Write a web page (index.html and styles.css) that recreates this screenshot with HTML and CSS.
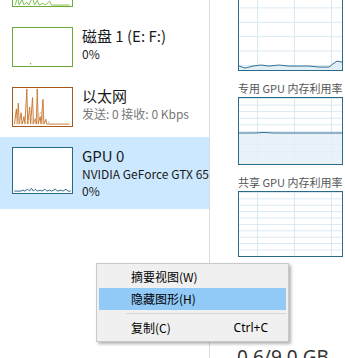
FILE: index.html
```html
<!DOCTYPE html>
<html>
<head>
	<title>任务管理器 - 性能</title>
<link rel="stylesheet" href="styles.css">
</head>
<body>
	<div class="window">
		<div class="sidebar">
			<div class="item item-first">
				<svg class="thumb thumb-disk" viewBox="0 0 61 40" width="61" height="40">
					<polyline points="2,39 4,30 6,39 9,33 11,39 14,36 16,39 20,31 22,39 25,34 27,39 31,37 33,39 38,35 40,39 59,39" fill="none" stroke="#7cc04a" stroke-width="1"/>
				</svg>
			</div>
			<div class="item">
				<svg class="thumb thumb-disk" viewBox="0 0 61 40" width="61" height="40">
					<circle cx="18" cy="37.5" r="0.8" fill="#7cc04a"/>
				</svg>
				<div class="info">
					<div class="title">磁盘 1 (E: F:)</div>
					<div class="sub">0%</div>
				</div>
			</div>
			<div class="item">
				<svg class="thumb thumb-net" viewBox="0 0 61 40" width="61" height="40">
					<polyline points="1,38 3,22 4,38 5,16 6,38 8,26 9,38 11,30 12,38 14,1 15,38 17,20 18,38 20,10 21,38 23,32 24,38 25,1 26,38 28,30 29,38 31,12 32,38 34,33 35,38 59,38" fill="none" stroke="#c8782f" stroke-width="1"/>
					<polyline points="4,38 5,28 6,38 10,34 12,38 19,30 20,38 30,24 31,38" fill="none" stroke="#e3b48a" stroke-width="1"/>
					<circle cx="37" cy="36" r="0.8" fill="#bbbbbb"/>
				</svg>
				<div class="info">
					<div class="title">以太网</div>
					<div class="sub sub-grey">发送: 0 接收: 0 Kbps</div>
				</div>
			</div>
			<div class="item item-selected">
				<svg class="thumb thumb-gpu" viewBox="0 0 61 47" width="61" height="47">
					<polyline points="1,45 8,45 10,44 12,45 15,43 17,45 19,42 21,45 23,43 25,45 28,44 30,45 33,43 35,45 38,44 40,45 44,43 46,45 50,44 52,45 55,43 57,45 60,45" fill="none" stroke="#27698c" stroke-width="1"/>
				</svg>
				<div class="info">
					<div class="title">GPU 0</div>
					<div class="sub">NVIDIA GeForce GTX 650</div>
					<div class="sub">0%</div>
				</div>
			</div>
		</div>

		<div class="detail">
			<div class="graph graph-main">
				<svg class="chart" viewBox="0 0 103 90" preserveAspectRatio="none">
					<polygon points="0,86 6,88 14,86 22,85 30,86 40,85 50,86 60,86 70,86 80,87 90,87 95,83 98,81 103,82 103,90 0,90" fill="#e3eff7"/>
					<polyline points="0,86 6,88 14,86 22,85 30,86 40,85 50,86 60,86 70,86 80,87 90,87 95,83 98,81 103,82" fill="none" stroke="#2f6f92" stroke-width="1"/>
				</svg>
			</div>
			<div class="label">专用 GPU 内存利用率</div>
			<div class="graph graph-fine">
				<svg class="chart" viewBox="0 0 103 66" preserveAspectRatio="none">
					<rect x="0" y="35" width="103" height="31" fill="#e3eff7" fill-opacity="0.8"/>
					<polyline points="0,35 15,35 25,34.5 35,35 103,35" fill="none" stroke="#2f6f92" stroke-width="1"/>
				</svg>
			</div>
			<div class="label">共享 GPU 内存利用率</div>
			<div class="graph graph-fine graph-last"></div>
			<div class="usage">0.6/9.0 GB</div>
		</div>

		<div class="menu">
			<div class="menu-item">摘要视图(W)</div>
			<div class="menu-item menu-active">隐藏图形(H)</div>
			<div class="menu-sep"></div>
			<div class="menu-item"><span>复制(C)</span><span class="shortcut">Ctrl+C</span></div>
		</div>
	</div>
</body>
</html>
```

FILE: styles.css
```css
body {
	margin: 0;
	background: #fff;
	font-family: "Noto Sans CJK SC", "Noto Sans", sans-serif;
	color: #1a1a1a;
}

.window {
	position: relative;
	display: flex;
	width: 345px;
	height: 358px;
	overflow: hidden;
}

/* left list of devices */
.sidebar {
	width: 209px;
	flex-shrink: 0;
	border-right: 1px solid #dcdcdc;
	margin-top: -43px;
	overflow: hidden;
}

.item {
	display: flex;
	align-items: flex-start;
	gap: 9px;
	padding: 10px 0 10px 12px;
	white-space: nowrap;
}

.item-selected {
	background: #cce8ff;
}

.thumb {
	display: block;
	flex-shrink: 0;
	box-sizing: border-box;
	background: #fff;
}

.thumb-disk { border: 1px solid #6aab38; }
.thumb-net { border: 1px solid #a8571a; }
.thumb-gpu { border: 1px solid #27698c; }

.title {
	font-size: 15px;
	line-height: 18px;
}

.sub {
	font-size: 12px;
	line-height: 17px;
}

.sub-grey {
	color: #777;
}

/* right side graphs */
.detail {
	flex: 1;
	padding-left: 28px;
	overflow: hidden;
}

.graph {
	position: relative;
	box-sizing: border-box;
	width: 105px;
	border: 1px solid #2b6a8d;
	background-color: #fff;
	background-image:
		linear-gradient(to right, #d8e8f2 1px, transparent 1px),
		linear-gradient(to bottom, #d8e8f2 1px, transparent 1px);
	background-repeat: repeat;
}

.graph-main {
	height: 91px;
	margin-top: -20px;
	background-size: 37px 100%, 100% 14.4px;
	background-position: 18px 0, 0 12px;
}

.graph-fine {
	height: 68px;
	background-size: 37px 100%, 100% 10%;
	background-position: 18px 0, 0 0;
}

.graph-last {
	height: 66px;
}

.chart {
	position: absolute;
	left: 0;
	top: 0;
	width: 100%;
	height: 100%;
}

.label {
	font-size: 11px;
	line-height: 14px;
	color: #555;
	padding: 10px 0 2px;
	white-space: nowrap;
}

.usage {
	font-family: "Noto Sans", sans-serif;
	font-size: 19px;
	line-height: 22px;
	color: #333;
	margin: 89px 0 0 -1px;
	white-space: nowrap;
}

/* right click menu */
.menu {
	position: absolute;
	left: 96px;
	top: 263px;
	width: 193px;
	box-sizing: border-box;
	padding: 2px;
	background: #f0f0f0;
	border: 1px solid #c9c9c9;
	box-shadow: 2px 2px 3px rgba(0, 0, 0, 0.3);
	font-size: 12px;
	color: #000;
}

.menu-item {
	display: flex;
	justify-content: space-between;
	height: 22px;
	line-height: 22px;
	padding: 0 18px 0 32px;
}

.menu-active {
	background: #91c9f7;
}

.menu-sep {
	height: 1px;
	margin: 3px 0 3px 27px;
	background: #d7d7d7;
}

.shortcut {
	font-family: "Noto Sans", sans-serif;
}
```
